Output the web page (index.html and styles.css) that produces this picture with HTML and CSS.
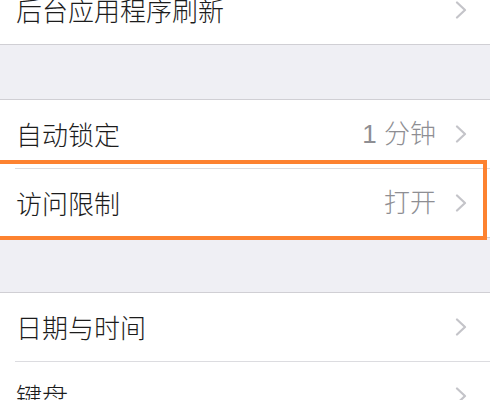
FILE: index.html
```html
<!DOCTYPE html>
<html lang="zh">
<head>
<meta charset="utf-8">
<link rel="stylesheet" href="styles.css">
</head>
<body>
<div class="screen">
  <div class="group first">
    <div class="row">
      <span class="label">后台应用程序刷新</span>
      <svg class="chev" viewBox="0 0 12 18" width="12" height="18"><polyline points="2,1.5 10,9 2,16.5"/></svg>
    </div>
  </div>
  <div class="group">
    <div class="row">
      <span class="label">自动锁定</span>
      <span class="value">1 分钟</span>
      <svg class="chev" viewBox="0 0 12 18" width="12" height="18"><polyline points="2,1.5 10,9 2,16.5"/></svg>
    </div>
    <div class="row">
      <span class="label">访问限制</span>
      <span class="value">打开</span>
      <svg class="chev" viewBox="0 0 12 18" width="12" height="18"><polyline points="2,1.5 10,9 2,16.5"/></svg>
    </div>
  </div>
  <div class="group">
    <div class="row">
      <span class="label">日期与时间</span>
      <svg class="chev" viewBox="0 0 12 18" width="12" height="18"><polyline points="2,1.5 10,9 2,16.5"/></svg>
    </div>
    <div class="row">
      <span class="label">键盘</span>
      <svg class="chev" viewBox="0 0 12 18" width="12" height="18"><polyline points="2,1.5 10,9 2,16.5"/></svg>
    </div>
  </div>
  <div class="highlight"></div>
</div>
</body>
</html>
```

FILE: styles.css
```css
html, body {
  margin: 0;
  padding: 0;
  background: #ffffff;
}
.screen {
  position: relative;
  width: 490px;
  height: 400px;
  overflow: hidden;
  background: #efeff4;
  font-family: "Noto Sans CJK SC", "Noto Sans", sans-serif;
  font-weight: 300;
}
.group {
  background: #ffffff;
  border-top: 1px solid #d0cfd4;
  border-bottom: 1px solid #d0cfd4;
  margin-top: 54px;
}
.group.first {
  margin-top: -25px;
}
.row {
  height: 68px;
  display: flex;
  align-items: center;
  margin-left: 15px;
  padding-left: 1px;
  padding-right: 23px;
}
.row + .row {
  border-top: 1px solid #dcdce0;
}
.label {
  flex: 1;
  font-size: 26px;
  line-height: 30px;
  color: #1c1c1c;
}
.value {
  font-family: "Liberation Sans", "Noto Sans CJK SC", sans-serif;
  font-size: 26px;
  line-height: 30px;
  color: #8e8e93;
  margin-right: 19px;
}
.chev {
  display: block;
  fill: none;
  stroke: #c4c4c9;
  stroke-width: 2.2;
  stroke-linecap: round;
  stroke-linejoin: round;
}
.highlight {
  position: absolute;
  left: -10px;
  top: 160px;
  width: 489px;
  height: 72px;
  border: 4px solid #fd8230;
}
```
